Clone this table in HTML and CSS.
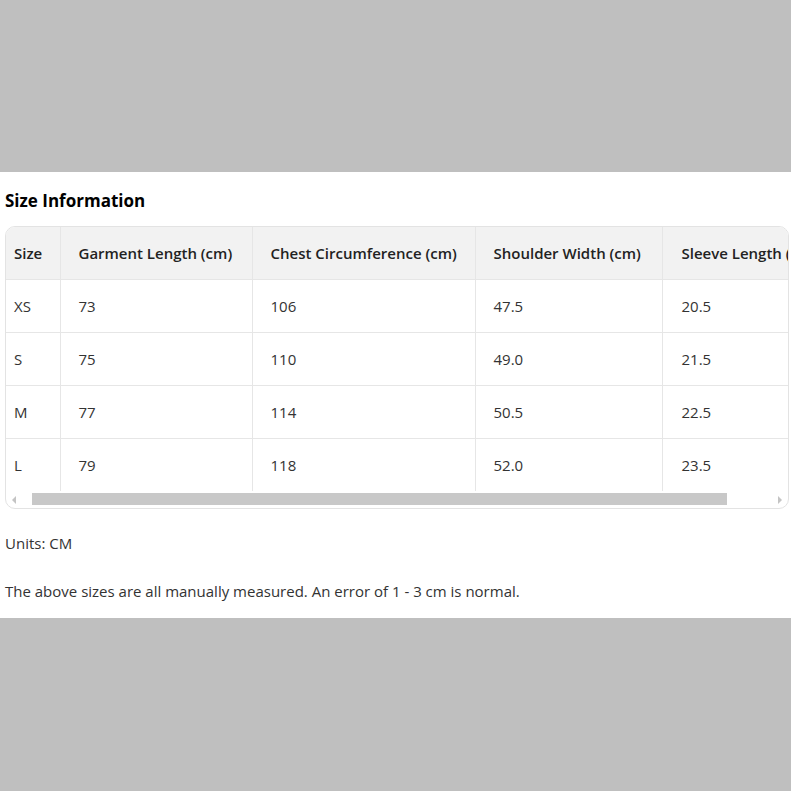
FILE: index.html
```html
<!DOCTYPE html>
<html lang="en">
<head>
<meta charset="utf-8">
<title>Size Information</title>
<link rel="stylesheet" href="styles.css">
</head>
<body>
<section class="panel">
  <h2 class="title">Size Information</h2>
  <div class="table-wrap">
    <div class="table-viewport">
      <table class="size-table">
        <colgroup>
          <col class="c1"><col class="c2"><col class="c3"><col class="c4"><col class="c5">
        </colgroup>
        <thead>
          <tr><th>Size</th><th>Garment Length (cm)</th><th>Chest Circumference (cm)</th><th>Shoulder Width (cm)</th><th>Sleeve Length (cm)</th></tr>
        </thead>
        <tbody>
          <tr><td>XS</td><td>73</td><td>106</td><td>47.5</td><td>20.5</td></tr>
          <tr><td>S</td><td>75</td><td>110</td><td>49.0</td><td>21.5</td></tr>
          <tr><td>M</td><td>77</td><td>114</td><td>50.5</td><td>22.5</td></tr>
          <tr><td>L</td><td>79</td><td>118</td><td>52.0</td><td>23.5</td></tr>
        </tbody>
      </table>
    </div>
    <div class="scrollbar">
      <span class="arrow arrow-left"></span>
      <div class="track"><div class="thumb"></div></div>
      <span class="arrow arrow-right"></span>
    </div>
  </div>
  <p class="note">Units: CM</p>
  <p class="note note-2">The above sizes are all manually measured. An error of 1 - 3 cm is normal.</p>
</section>
</body>
</html>
```

FILE: styles.css
```css
html, body {
  margin: 0;
  padding: 0;
}
body {
  background: #bfbfbf;
  min-height: 100vh;
  padding-top: 172px;
  box-sizing: border-box;
  font-family: "Open Sans", "Noto Sans", "Liberation Sans", sans-serif;
  color: #333;
}
.panel {
  background: #fff;
  padding: 17px 2px 16px 5px;
}
.title {
  margin: 0 0 13px;
  font-size: 17px;
  line-height: 24px;
  font-weight: 700;
  color: #000;
}
.table-wrap {
  border: 1px solid #e3e3e3;
  border-radius: 10px;
  overflow: hidden;
}
.table-viewport {
  overflow: hidden;
}
.size-table {
  border-collapse: collapse;
  table-layout: fixed;
  width: 818px;
  margin-left: -12px;
  font-size: 15px;
}
.c1 { width: 66px; }
.c2 { width: 192px; }
.c3 { width: 223px; }
.c4 { width: 187px; }
.c5 { width: 150px; }
.size-table th,
.size-table td {
  height: 52px;
  padding: 0 18px;
  text-align: left;
  white-space: nowrap;
  overflow: hidden;
  border-right: 1px solid #e6e6e6;
  border-bottom: 1px solid #e6e6e6;
}
.size-table th:first-child,
.size-table td:first-child {
  padding-left: 20px;
}
.size-table th:last-child,
.size-table td:last-child {
  border-right: none;
  padding-left: 19px;
}
.size-table tbody tr:last-child td {
  border-bottom: none;
}
.size-table th {
  background: #f2f2f2;
  font-weight: 600;
  color: #222;
}
.size-table td {
  color: #333;
}
.scrollbar {
  display: flex;
  align-items: center;
  height: 17px;
}
.arrow {
  width: 16px;
  height: 17px;
  display: flex;
  align-items: center;
  justify-content: center;
}
.arrow::before {
  content: "";
  width: 0;
  height: 0;
  border-top: 4px solid transparent;
  border-bottom: 4px solid transparent;
}
.arrow-left::before {
  border-right: 4px solid #c4c4c4;
}
.arrow-right::before {
  border-left: 4px solid #c4c4c4;
}
.track {
  flex: 1;
  height: 12px;
  margin-top: -2px;
}
.thumb {
  margin-left: 10px;
  width: 695px;
  height: 12px;
  background: #c8c8c8;
}
.note {
  margin: 23px 0 0;
  font-size: 15px;
  line-height: 22px;
  color: #333;
}
.note-2 {
  margin-top: 26px;
}
```
